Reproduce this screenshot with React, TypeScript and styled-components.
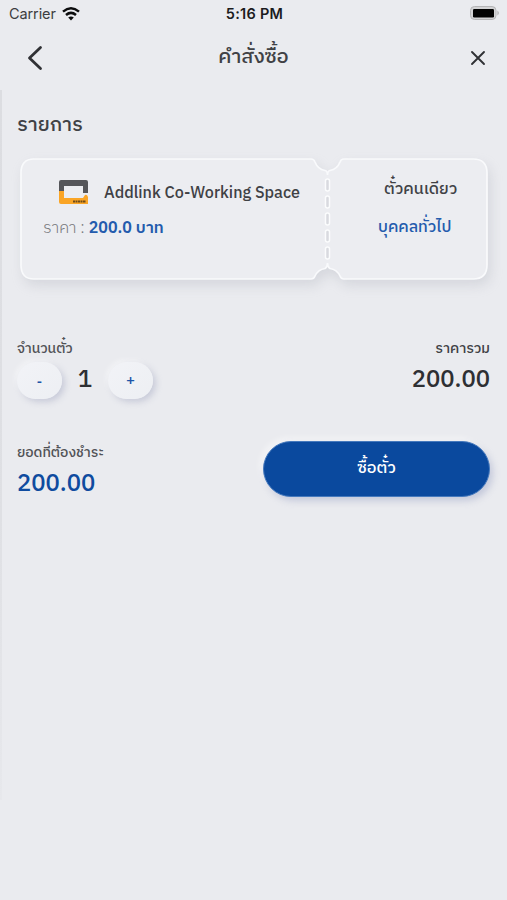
import React from 'react';
import styled, { createGlobalStyle } from 'styled-components';

const GlobalStyle = createGlobalStyle`
  * { box-sizing: border-box; }
  body { margin: 0; background: #eaebef; }
`;

const Screen = styled.main`
  position: relative;
  width: 507px;
  height: 900px;
  overflow: hidden;
  background: #eaebef;
  color: #343539;
  font-family: "IBM Plex Sans Thai", "Noto Sans Thai", "Noto Sans", sans-serif;
`;

const EdgeShade = styled.div`
  position: absolute;
  left: 0;
  top: 90px;
  width: 2px;
  height: 710px;
  background: linear-gradient(#dcdde1, #dfe0e4 60%, #e7e8ec);
`;

const StatusBar = styled.div`
  display: grid;
  grid-template-columns: 1fr auto 1fr;
  align-items: center;
  height: 28px;
  padding: 0 7px 0 9px;
  font-family: Inter, sans-serif;
  font-size: 14.5px;
  line-height: 28px;
`;

const Carrier = styled.div`
  display: flex;
  align-items: center;
  gap: 6px;
  color: #3c3d40;
  letter-spacing: -0.1px;
`;

const Clock = styled.div`
  color: #1c1c1e;
  font-size: 14.5px;
  font-weight: 600;
  letter-spacing: 0.25px;
`;

const Battery = styled.svg`
  justify-self: end;
  margin-top: -2px;
`;

const Header = styled.header`
  display: flex;
  justify-content: space-between;
  align-items: center;
  height: 60px;
  padding: 0 21px 0 27px;
`;

const HeaderTitle = styled.h1`
  margin: -3px 6px 0 0;
  font-size: 20.2px;
  line-height: 28px;
  font-weight: 500;
  color: #404145;
`;

const IconButton = styled.button`
  display: flex;
  padding: 0;
  border: 0;
  background: none;
  color: #303135;
`;

const Text = styled.span<{ $size: number; $line?: number; $weight?: number; $color?: string; $track?: number }>`
  display: block;
  white-space: nowrap;
  font-size: ${(p) => p.$size}px;
  line-height: ${(p) => p.$line ?? 24}px;
  font-weight: ${(p) => p.$weight ?? 500};
  color: ${(p) => p.$color ?? '#404145'};
  letter-spacing: ${(p) => p.$track ?? 0}px;
`;

const Content = styled.section`
  padding: 25px 17px 0;
`;

const Ticket = styled.article`
  position: relative;
  display: grid;
  grid-template-columns: 308px 1fr;
  width: 468px;
  height: 122px;
  margin: 20px 0 0 3px;
`;

const TicketShape = styled.svg`
  position: absolute;
  left: 0;
  top: 0;
  overflow: visible;
  filter: drop-shadow(3px 6px 6px rgba(150, 153, 168, 0.24));
`;

const TicketMain = styled.div`
  position: relative;
  padding: 20px 0 0 23px;
`;

const PlaceRow = styled.div`
  display: flex;
  align-items: center;
  gap: 15px;
  height: 27px;
  padding-left: 15px;
`;

const PlaceName = styled.h2`
  margin: 4px 0 0;
  font-size: 16.1px;
  line-height: 24px;
  font-weight: 500;
  color: #404145;
`;

const PriceRow = styled.div`
  display: flex;
  gap: 4px;
  margin-top: 12px;
`;

const TicketType = styled.div`
  position: relative;
  display: flex;
  flex-direction: column;
  gap: 14px;
  padding-top: 20px;
`;

const Shift = styled.div<{ $left: number }>`
  padding-left: ${(p) => p.$left}px;
`;

const Summary = styled.div`
  display: flex;
  justify-content: space-between;
  height: 104px;
  margin-top: 57px;
`;

const Column = styled.div<{ $end?: boolean }>`
  display: flex;
  flex-direction: column;
  align-items: ${(p) => (p.$end ? 'flex-end' : 'flex-start')};
`;

const Stepper = styled.div`
  display: flex;
  align-items: center;
  margin-top: 1px;
`;

const Quantity = styled.output`
  width: 46px;
  font-size: 24px;
  line-height: 34px;
  margin-top: -2px;
  font-weight: 500;
  text-align: center;
  color: #2e2f33;
`;

const StepButton = styled.button`
  width: 45px;
  height: 37px;
  padding: 0;
  border: 0;
  border-radius: 19px;
  background: linear-gradient(140deg, #f2f3f7, #edeff3);
  box-shadow: 3px 3px 6px rgba(160, 165, 190, 0.45), -2px -2px 5px rgba(255, 255, 255, 0.5);
  color: #1d55a8;
  font: 600 15px/35px "Noto Sans", sans-serif;
`;

const Payment = styled.div`
  display: flex;
  justify-content: space-between;
`;

const BuyButton = styled.button`
  width: 227px;
  height: 56px;
  padding: 0;
  border: 1px solid #4579bd;
  border-radius: 28px;
  background: #0a499e;
  box-shadow: 3px 4px 7px rgba(150, 160, 195, 0.45), -3px -3px 6px rgba(255, 255, 255, 0.5);
  font-family: inherit;
  display: flex;
  align-items: center;
  justify-content: center;
`;

function TicketOutline() {
  return (
    <TicketShape width="468" height="122" fill="none">
      <path
        d="M14 1H291Q294 1 295 4A13.500 13.500 0 0 0 305 12.500Q307.500 13 307.500 17Q307.500 13 310 12.500A13.500 13.500 0 0 0 320 4Q321 1 324 1H453Q467 1 467 15V107Q467 121 453 121H324Q321 121 320 118A13.500 13.500 0 0 0 310 110.500Q307.500 109 307.500 105Q307.500 109 305 110.500A13.500 13.500 0 0 0 295 118Q294 121 291 121H14Q1 121 1 107V15Q1 1 14 1Z"
        fill="#ecedf1"
        stroke="#f9fafc"
        strokeWidth="1.700"
      />
      {[21, 38, 55, 72, 89].map((y) => (
        <rect key={y} x="305.500" y={y} width="4" height="12" rx="2" fill="#d9dadf" stroke="#fbfcfd" strokeWidth="1.500" />
      ))}
    </TicketShape>
  );
}

export default function App() {
  return (
    <Screen>
      <GlobalStyle />
      <EdgeShade />
      <StatusBar>
        <Carrier>
          Carrier
          <svg width="18" height="14" viewBox="0 0 18 14" fill="none" stroke="#0c0c0d" strokeWidth="2.500">
            <path d="M1 4.600Q9-2 17 4.600M4 8Q9 3.800 14 8" />
            <path d="M9 13.500L6.200 10.500Q9 8.300 11.800 10.500Z" fill="#0c0c0d" stroke="none" />
          </svg>
        </Carrier>
        <Clock>5:16 PM</Clock>
        <Battery width="31" height="16" viewBox="0 0 31 16">
          <rect x="1.500" y="1.500" width="25.500" height="13" rx="4" fill="#d3d3d5" stroke="#b5b5b7" />
          <rect x="4" y="4" width="21" height="8.500" rx="1.200" fill="#020202" />
          <path d="M28.500 5.500Q31 8 28.500 10.500Z" fill="#a6a6a8" />
        </Battery>
      </StatusBar>
      <Header>
        <IconButton aria-label="Back">
          <svg width="16" height="26" viewBox="0 0 16 26" fill="none" stroke="currentColor" strokeWidth="2.800" strokeLinecap="round" strokeLinejoin="round">
            <path d="M13.500 2.500L2.500 13L13.500 23.500" />
          </svg>
        </IconButton>
        <HeaderTitle>คำสั่งซื้อ</HeaderTitle>
        <IconButton aria-label="Close">
          <svg width="16" height="16" viewBox="0 0 16 16" stroke="currentColor" strokeWidth="1.900" strokeLinecap="round">
            <path d="M2 2L14 14M14 2L2 14" />
          </svg>
        </IconButton>
      </Header>
      <Content>
        <Text $size={20} $line={25}>รายการ</Text>
        <Ticket>
          <TicketOutline />
          <TicketMain>
            <PlaceRow>
              <svg width="31" height="26" viewBox="0 0 31 26">
                <path d="M1 12V3Q1 1 3 1H28Q30 1 30 3V14H25V7H6V12Z" fill="#55565a" />
                <path d="M1 12H6V19H25L27 16Q29 15 30 18V25H3Q1 25 1 23Z" fill="#faa526" />
                <path d="M15 22.500H28" stroke="#6d4b1a" strokeWidth="2" strokeDasharray="2 .5" />
              </svg>
              <PlaceName>Addlink Co-Working Space</PlaceName>
            </PlaceRow>
            <PriceRow>
              <Text $size={16} $weight={300} $color="#77787c">ราคา :</Text>
              <Text $size={16} $weight={600} $color="#235bad">200.0 บาท</Text>
            </PriceRow>
          </TicketMain>
          <TicketType>
            <Shift $left={56}><Text $size={16.1}>ตั๋วคนเดียว</Text></Shift>
            <Shift $left={50}><Text $size={16} $color="#235bad">บุคคลทั่วไป</Text></Shift>
          </TicketType>
        </Ticket>
        <Summary>
          <Column>
            <Text $size={13.9} $color="#515256">จำนวนตั๋ว</Text>
            <Stepper>
              <StepButton>-</StepButton>
              <Quantity>1</Quantity>
              <StepButton>+</StepButton>
            </Stepper>
          </Column>
          <Column $end>
            <Text $size={14.2}>ราคารวม</Text>
            <Text $size={23.8} $line={38} $color="#2e2f33">200.00</Text>
          </Column>
        </Summary>
        <Payment>
          <Column>
            <Text $size={13.9} $color="#515256">ยอดที่ต้องชำระ</Text>
            <Text $size={23.8} $line={38} $color="#0f4b9f">200.00</Text>
          </Column>
          <BuyButton><Text $size={16.2} $color="#fff">ซื้อตั๋ว</Text></BuyButton>
        </Payment>
      </Content>
    </Screen>
  );
}
